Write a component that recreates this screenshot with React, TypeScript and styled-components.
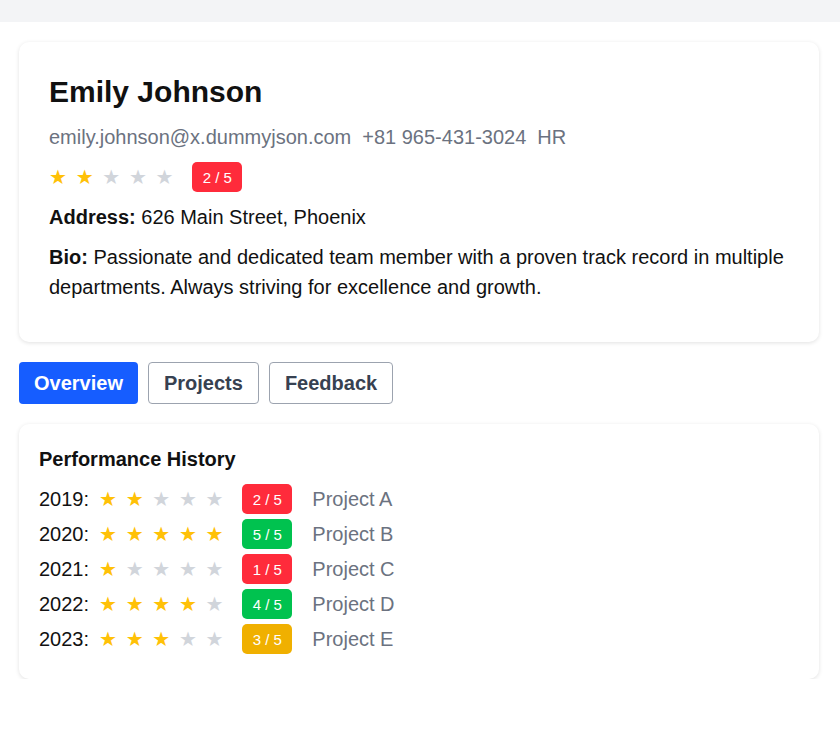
import React from "react";
import styled, { createGlobalStyle } from "styled-components";

const GlobalStyle = createGlobalStyle`
  html, body { margin: 0; padding: 0; background: #ffffff; }
  body { font-family: "Liberation Sans", Arial, sans-serif; color: #111111; }
  * { box-sizing: border-box; }
`;

const TopBar = styled.div`
  height: 22px;
  background: #f3f4f6;
`;

const Page = styled.main`
  width: 800px;
  margin: 20px 0 0 19px;
  display: flex;
  flex-direction: column;
  gap: 20px;
`;

const Card = styled.section<{ $pad: string }>`
  background: #ffffff;
  border-radius: 10px;
  box-shadow: 0 1px 4px rgba(0, 0, 0, 0.12);
  padding: ${(p) => p.$pad};
  display: flex;
  flex-direction: column;
`;

const Name = styled.h1`
  margin: 0;
  font-size: 30px;
  line-height: 36px;
  font-weight: 700;
  color: #111111;
`;

const ContactRow = styled.div`
  margin-top: 15px;
  display: flex;
  gap: 11px;
  font-size: 20px;
  line-height: 24px;
  color: #6b7280;
`;

const RatingRow = styled.div<{ $mt: number }>`
  margin-top: ${(p) => p.$mt}px;
  display: flex;
  align-items: center;
  height: 30px;
`;

const Stars = styled.div`
  display: flex;
  gap: 9.9px;
  margin-right: 20px;
`;

const Star = styled.span<{ $on: boolean }>`
  display: inline-block;
  width: 16.76px;
  font-family: "DejaVu Sans", sans-serif;
  font-size: 20px;
  line-height: 30px;
  text-align: center;
  color: ${(p) => (p.$on ? "#ffc107" : "#d1d5db")};
`;

const Badge = styled.span<{ $bg: string }>`
  display: inline-flex;
  align-items: center;
  justify-content: center;
  width: 50px;
  height: 30px;
  border-radius: 5px;
  background: ${(p) => p.$bg};
  color: #ffffff;
  font-size: 15px;
`;

const InfoLine = styled.p<{ $mt: number }>`
  margin: ${(p) => p.$mt}px 0 0;
  font-size: 20px;
  line-height: 30px;
  color: #111111;
  b { font-weight: 700; }
`;

const Tabs = styled.nav`
  display: flex;
  gap: 10px;
`;

const Tab = styled.button<{ $active?: boolean }>`
  height: 42px;
  padding: 0 15px;
  border-radius: 4px;
  border: ${(p) => (p.$active ? "none" : "1px solid #9ca3af")};
  background: ${(p) => (p.$active ? "#165dff" : "#ffffff")};
  color: ${(p) => (p.$active ? "#ffffff" : "#374151")};
  font-family: "Liberation Sans", Arial, sans-serif;
  font-size: 20px;
  font-weight: 700;
  cursor: pointer;
`;

const SectionTitle = styled.h3`
  margin: 0 0 13.5px;
  font-size: 20px;
  line-height: 24px;
  font-weight: 700;
  color: #111111;
`;

const HistoryList = styled.div`
  display: flex;
  flex-direction: column;
  gap: 5px;
`;

const HistoryRow = styled.div`
  display: flex;
  align-items: center;
  height: 30px;
  font-size: 20px;
`;

const Year = styled.span`
  width: 60px;
  color: #111111;
`;

const ProjectName = styled.span`
  margin-left: 20px;
  color: #6b7280;
`;

const colorFor = (r: number) => (r <= 2 ? "#ff2b3b" : r === 3 ? "#f0b000" : "#00c24f");

const StarRow = ({ value }: { value: number }) => (
  <Stars>
    {[1, 2, 3, 4, 5].map((i) => (
      <Star key={i} $on={i <= value}>★</Star>
    ))}
  </Stars>
);

const history = [
  { year: 2019, rating: 2, project: "Project A" },
  { year: 2020, rating: 5, project: "Project B" },
  { year: 2021, rating: 1, project: "Project C" },
  { year: 2022, rating: 4, project: "Project D" },
  { year: 2023, rating: 3, project: "Project E" },
];

export default function App() {
  return (
    <>
      <GlobalStyle />
      <TopBar />
      <Page>
        <Card $pad="32px 30px 40px">
          <Name>Emily Johnson</Name>
          <ContactRow>
            <span>emily.johnson@x.dummyjson.com</span>
            <span>+81 965-431-3024</span>
            <span>HR</span>
          </ContactRow>
          <RatingRow $mt={13}>
            <StarRow value={2} />
            <Badge $bg={colorFor(2)}>2 / 5</Badge>
          </RatingRow>
          <InfoLine $mt={10}>
            <b>Address:</b> 626 Main Street, Phoenix
          </InfoLine>
          <InfoLine $mt={10}>
            <b>Bio:</b> Passionate and dedicated team member with a proven track record in multiple
            departments. Always striving for excellence and growth.
          </InfoLine>
        </Card>
        <Tabs>
          <Tab $active>Overview</Tab>
          <Tab>Projects</Tab>
          <Tab>Feedback</Tab>
        </Tabs>
        <Card $pad="22.5px 20px 25px">
          <SectionTitle>Performance History</SectionTitle>
          <HistoryList>
            {history.map((h) => (
              <HistoryRow key={h.year}>
                <Year>{h.year}:</Year>
                <StarRow value={h.rating} />
                <Badge $bg={colorFor(h.rating)}>{h.rating} / 5</Badge>
                <ProjectName>{h.project}</ProjectName>
              </HistoryRow>
            ))}
          </HistoryList>
        </Card>
      </Page>
    </>
  );
}
